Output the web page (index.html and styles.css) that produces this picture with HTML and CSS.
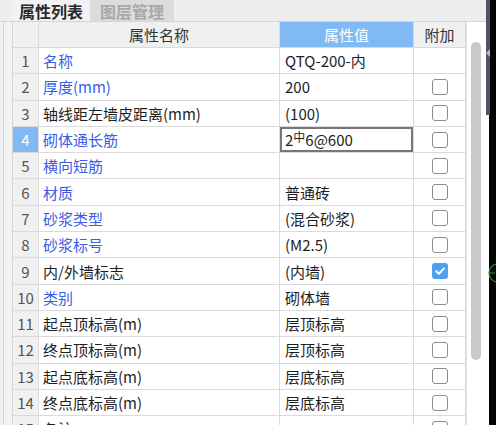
FILE: index.html
```html
<!DOCTYPE html>
<html lang="zh-CN">
<head>
<meta charset="utf-8">
<title>属性列表</title>
<link rel="stylesheet" href="styles.css">
</head>
<body>
<div class="app">
  <div class="panel">
    <div class="tabs">
      <div class="tab active">属性列表</div>
      <div class="tab inactive">图层管理</div>
    </div>
    <div class="content">
      <div class="gutter"></div>
      <div class="grid">
        <div class="hd num"></div>
        <div class="hd">属性名称</div>
        <div class="hd sel">属性值</div>
        <div class="hd">附加</div>

        <div class="num">1</div><div class="name blue">名称</div><div class="val">QTQ-200-内</div><div class="add"></div>
        <div class="num">2</div><div class="name blue">厚度(mm)</div><div class="val">200</div><div class="add"><span class="cb"></span></div>
        <div class="num">3</div><div class="name">轴线距左墙皮距离(mm)</div><div class="val">(100)</div><div class="add"><span class="cb"></span></div>
        <div class="num cur">4</div><div class="name blue">砌体通长筋</div><div class="val edit">2<span class="sup">中</span>6@600</div><div class="add"><span class="cb"></span></div>
        <div class="num">5</div><div class="name blue">横向短筋</div><div class="val"></div><div class="add"><span class="cb"></span></div>
        <div class="num">6</div><div class="name blue">材质</div><div class="val">普通砖</div><div class="add"><span class="cb"></span></div>
        <div class="num">7</div><div class="name blue">砂浆类型</div><div class="val">(混合砂浆)</div><div class="add"><span class="cb"></span></div>
        <div class="num">8</div><div class="name blue">砂浆标号</div><div class="val">(M2.5)</div><div class="add"><span class="cb"></span></div>
        <div class="num">9</div><div class="name">内/外墙标志</div><div class="val">(内墙)</div><div class="add"><span class="cb on"><svg viewBox="0 0 16 16" width="16" height="16"><path d="M4.2 8.3 L6.9 10.8 L11.8 5.6" fill="none" stroke="#fff" stroke-width="2" stroke-linecap="round" stroke-linejoin="round"/></svg></span></div>
        <div class="num">10</div><div class="name blue">类别</div><div class="val">砌体墙</div><div class="add"><span class="cb"></span></div>
        <div class="num">11</div><div class="name">起点顶标高(m)</div><div class="val">层顶标高</div><div class="add"><span class="cb"></span></div>
        <div class="num">12</div><div class="name">终点顶标高(m)</div><div class="val">层顶标高</div><div class="add"><span class="cb"></span></div>
        <div class="num">13</div><div class="name">起点底标高(m)</div><div class="val">层底标高</div><div class="add"><span class="cb"></span></div>
        <div class="num">14</div><div class="name">终点底标高(m)</div><div class="val">层底标高</div><div class="add"><span class="cb"></span></div>
        <div class="num">15</div><div class="name">备注</div><div class="val"></div><div class="add"><span class="cb"></span></div>
      </div>
      <div class="scroll"><div class="thumb"></div></div>
    </div>
  </div>
  <div class="edge">
    <div class="notch"></div>
    <svg class="ring" viewBox="0 0 20 24" width="20" height="24"><circle cx="11" cy="12" r="9" fill="none" stroke="#1f8f2a" stroke-width="1.2"/><path d="M2 12 H8" stroke="#1f8f2a" stroke-width="1.2"/></svg>
  </div>
</div>
</body>
</html>
```

FILE: styles.css
```css
* { box-sizing: border-box; }
html, body { margin: 0; padding: 0; }
body {
  width: 496px;
  height: 425px;
  overflow: hidden;
  background: #f0f0f0;
  font-family: "Noto Sans CJK SC", "Noto Sans", "DejaVu Sans", sans-serif;
  font-size: 15px;
  color: #1e1e1e;
}
.app {
  display: flex;
  width: 496px;
  height: 425px;
}
.panel {
  width: 486px;
  display: flex;
  flex-direction: column;
  background: #f0f0f0;
}
.tabs {
  height: 22px;
  display: flex;
  background: #eeeeee;
  border-bottom: 1px solid #d4d4d4;
  padding-left: 12px;
}
.tab {
  height: 21px;
  display: flex;
  align-items: center;
  justify-content: center;
  font-size: 16px;
  font-weight: 700;
  line-height: 1;
}
.tab.active {
  width: 78px;
  background: #f2f2f2;
  color: #2a2a2a;
}
.tab.inactive {
  width: 84px;
  background: #dcdcdc;
  color: #a8a8a8;
}
.content {
  flex: 1;
  display: flex;
  min-height: 0;
}
.gutter {
  margin-left: 3px;
  border-left: 1px solid #d2d2d2;
  background: #f3f3f3;
  flex: none;
  width: 9px;
}
.grid {
  display: grid;
  grid-template-columns: 26px 241px 134px 52px;
  grid-template-rows: 26px repeat(15, 26.3px);
  border-left: 1px solid #d6d6d6;
  background: #ffffff;
  align-self: flex-start;
  flex: none;
}
.grid > div {
  border-right: 1px solid #dadada;
  border-bottom: 1px solid #dadada;
  display: flex;
  align-items: center;
  white-space: nowrap;
  overflow: hidden;
}
.hd {
  background: #f0f0f0;
  justify-content: center;
  color: #333;
}
.hd.sel {
  background: #80b9f4;
  color: #ffffff;
}
.num {
  background: #f0f0f0;
  justify-content: center;
  color: #555;
  font-size: 15px;
}
.num.cur {
  background: #80b9f4;
  color: #fff;
}
.name { padding-left: 4px; }
.val { padding-left: 5px; }
.blue { color: #3b5ce6; }
.val.edit {
  box-shadow: inset 0 0 0 2px #777777;
}
.sup {
  font-size: 12px;
  position: relative;
  top: -3px;
}
.add { justify-content: center; }
.cb {
  width: 16px;
  height: 16px;
  border: 1.5px solid #8c8c8c;
  border-radius: 3px;
  background: #fff;
  display: block;
}
.cb.on {
  border: none;
  background: #4f9ff3;
}
.cb.on svg { display: block; }
.scroll {
  flex: 1;
  background: #ffffff;
  border-left: 1px solid #e2e2e2;
  padding-left: 4px;
}
.thumb {
  width: 10px;
  height: 318px;
  margin-top: 20px;
  background: #c9c9c9;
  border-radius: 5px;
}
.edge {
  width: 10px;
  position: relative;
  background:
    linear-gradient(to right, #4d555e 0, #4d555e 4px, #050505 4px) top / 100% 115px no-repeat,
    linear-gradient(to right, #ffffff 0, #ffffff 3px, #050505 3px);
  overflow: hidden;
}
.notch {
  position: absolute;
  left: 0;
  top: 49px;
  width: 0;
  height: 0;
  border-top: 4px solid transparent;
  border-bottom: 4px solid transparent;
  border-right: 4px solid #b8bec4;
}
.ring {
  position: absolute;
  left: 1px;
  top: 261px;
}
```
